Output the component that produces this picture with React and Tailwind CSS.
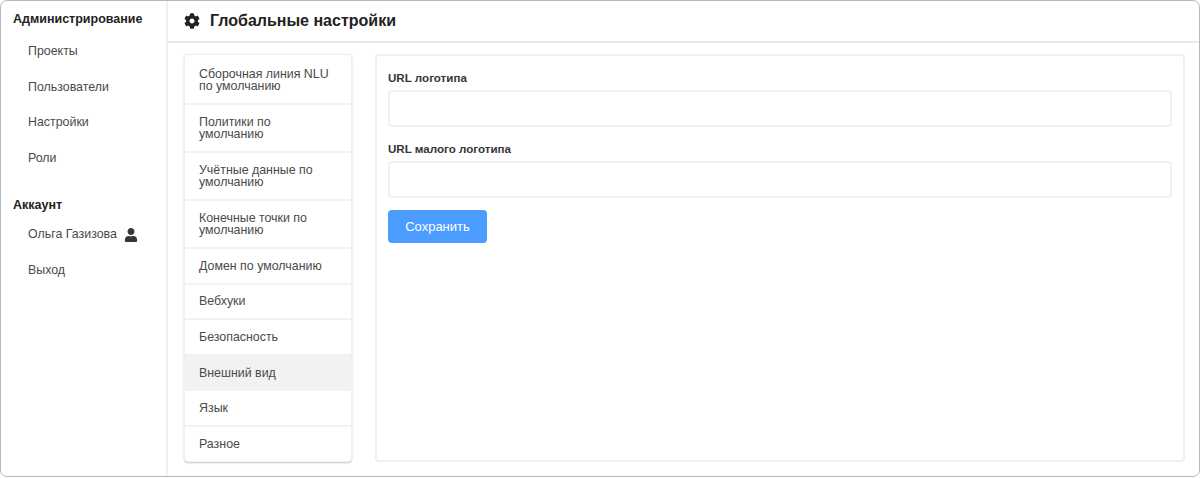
import { FaCog, FaUser } from 'react-icons/fa';

const MENU = [
  'Сборочная линия NLU по умолчанию',
  'Политики по умолчанию',
  'Учётные данные по умолчанию',
  'Конечные точки по умолчанию',
  'Домен по умолчанию',
  'Вебхуки',
  'Безопасность',
  'Внешний вид',
  'Язык',
  'Разное',
];

function SideLink({ children }) {
  return (
    <div className="h-[35.5px] pl-[27px] flex items-center gap-[7px] text-[12.4px] text-[#4a4a4a]">
      {children}
    </div>
  );
}

function Field({ label }) {
  return (
    <div className="mb-[12px]">
      <label className="block h-[20px] mb-[2px] text-[11.6px] leading-[20px] font-bold text-[#363636]">{label}</label>
      <input className="block w-full h-[37px] rounded-[4px] border-2 border-[#f0f0f0] bg-white outline-none" />
    </div>
  );
}

export default function App() {
  return (
    <div className="w-[1200px] h-[478px] bg-white font-['Liberation_Sans',Arial,sans-serif]">
      <div className="w-full h-[477px] flex rounded-[7px] border border-[#b8b8b8] bg-white overflow-hidden">
        <aside className="w-[167px] shrink-0 border-r-2 border-[#f0f0f0] pt-[9px]">
          <h3 className="h-[18px] pl-[12px] mb-[6px] text-[12.5px] leading-[18px] font-bold text-[#222]">Администрирование</h3>
          <SideLink>Проекты</SideLink>
          <SideLink>Пользователи</SideLink>
          <SideLink>Настройки</SideLink>
          <SideLink>Роли</SideLink>
          <h3 className="h-[18px] pl-[12px] mt-[20px] mb-[3px] text-[12.5px] leading-[18px] font-bold text-[#222]">Аккаунт</h3>
          <SideLink>
            Ольга Газизова <FaUser className="text-[14px] text-[#363636]" />
          </SideLink>
          <SideLink>Выход</SideLink>
        </aside>
        <main className="flex-1 flex flex-col min-w-0">
          <header className="h-[42px] shrink-0 border-b-2 border-[#e8e8e8] pl-[16px] flex items-center gap-[10px] text-[#222]">
            <FaCog className="text-[16px]" />
            <h1 className="text-[16px] font-bold">Глобальные настройки</h1>
          </header>
          <div className="flex-1 flex gap-[23px] pl-[16px] pr-[14px] pt-[11px] pb-[14px]">
            <nav className="w-[168px] shrink-0 rounded-[4px] border border-[#f0f0f0] bg-white shadow-[0_1px_2px_rgba(0,0,0,0.22)]">
              {MENU.map((item, i) => (
                <div
                  key={item}
                  className={`px-[14px] text-[12.4px] leading-[12px] text-[#4a4a4a] ${i === 0 ? 'pt-[13px] pb-[11px]' : 'border-t-2 border-[#f2f2f2]'} ${i > 0 && i < 4 ? 'py-[11px]' : ''} ${i >= 4 ? 'py-[10.8px]' : ''} ${item === 'Внешний вид' ? 'bg-[#f2f2f2]' : ''}`}
                >
                  {item}
                </div>
              ))}
            </nav>
            <section className="flex-1 rounded-[4px] border-2 border-[#f0f0f0] px-[11px] pt-[12px]">
              <Field label="URL логотипа" />
              <Field label="URL малого логотипа" />
              <button className="block w-[99px] h-[33px] rounded-[4px] bg-[#4a9dff] text-[13px] text-white">Сохранить</button>
            </section>
          </div>
        </main>
      </div>
    </div>
  );
}
